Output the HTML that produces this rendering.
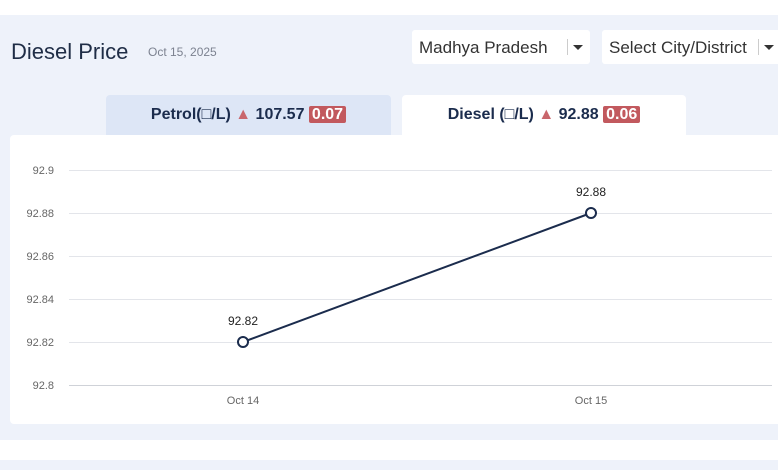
<!DOCTYPE html>
<html><head><style>
body{margin:0;width:778px;height:467px;overflow:hidden;background:#fff;font-family:"Liberation Sans",sans-serif;position:relative}
.bg{position:absolute;left:0;top:15px;width:778px;height:425px;background:#eef2fa}
.bg2{position:absolute;left:0;top:460px;width:778px;height:10px;background:#eef2fa}
.title{position:absolute;left:11px;top:39px;font-size:22px;color:#1f2d46}
.date{position:absolute;left:148px;top:45px;font-size:12px;color:#7c8290}
.sel{position:absolute;top:30px;height:34px;background:#fff;border-radius:3px;font-size:17px;color:#333;line-height:35px}
.sel .bar{position:absolute;top:9px;width:1px;height:16px;background:#ccc}
.sel .arr{position:absolute;top:15px;width:0;height:0;border-left:5px solid transparent;border-right:5px solid transparent;border-top:5px solid #333}
.tab{position:absolute;top:95px;height:40px;line-height:40px;text-align:center;font-size:16px;font-weight:bold;color:#1b2c4d;border-radius:4px 4px 0 0}
.tri{color:#c9666c;font-size:16px}
.badge{background:#c2595e;color:#fff;padding:0 3px;border-radius:2px}
.card{position:absolute;left:10px;top:135px;width:780px;height:289px;background:#fff;border-radius:4px}
</style></head><body>
<div class="bg"></div><div class="bg2"></div>
<div class="title">Diesel Price</div>
<div class="date">Oct 15, 2025</div>
<div class="sel" style="left:412px;width:178px"><span style="margin-left:7px">Madhya Pradesh</span><div class="bar" style="left:155px"></div><div class="arr" style="left:161px"></div></div>
<div class="sel" style="left:602px;width:190px"><span style="margin-left:7px">Select City/District</span><div class="bar" style="left:156px"></div><div class="arr" style="left:162px"></div></div>
<div class="tab" style="left:106px;width:285px;background:#dde6f6">Petrol(□/L) <span class="tri">▲</span> 107.57 <span class="badge">0.07</span></div>
<div class="card"></div>
<div class="tab" style="left:402px;width:284px;background:#fff">Diesel (□/L) <span class="tri">▲</span> 92.88 <span class="badge">0.06</span></div>
<svg style="position:absolute;left:0;top:0" width="778" height="467" font-family="Liberation Sans, sans-serif">
<g stroke="#e3e5ea" stroke-width="1">
<line x1="69" y1="170.5" x2="772" y2="170.5"/><line x1="69" y1="213.5" x2="772" y2="213.5"/><line x1="69" y1="256.5" x2="772" y2="256.5"/><line x1="69" y1="299.5" x2="772" y2="299.5"/><line x1="69" y1="342.5" x2="772" y2="342.5"/><line x1="69" y1="385.5" x2="772" y2="385.5" stroke="#cfd2d8"/>
</g>
<g font-size="11" fill="#666" text-anchor="end">
<text x="54" y="174">92.9</text><text x="54" y="217">92.88</text><text x="54" y="260">92.86</text><text x="54" y="303">92.84</text><text x="54" y="346">92.82</text><text x="54" y="389">92.8</text>
</g>
<g font-size="11" fill="#666" text-anchor="middle"><text x="243" y="404">Oct 14</text><text x="591" y="404">Oct 15</text></g>
<line x1="243" y1="342" x2="591" y2="213" stroke="#1b2c4d" stroke-width="2"/>
<circle cx="243" cy="342" r="5" fill="#fff" stroke="#1b2c4d" stroke-width="2"/>
<circle cx="591" cy="213" r="5" fill="#fff" stroke="#1b2c4d" stroke-width="2"/>
<g font-size="12" fill="#222" text-anchor="middle"><text x="243" y="325">92.82</text><text x="591" y="196">92.88</text></g>
</svg>
</body></html>
